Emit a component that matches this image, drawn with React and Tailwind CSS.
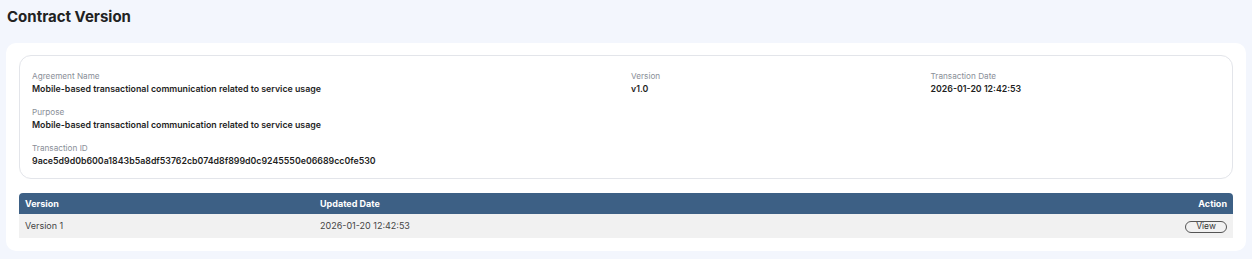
export default function App() {
  const font = { fontFamily: "Inter, 'Noto Sans', sans-serif" };

  return (
    <main className="min-h-[259px] w-full bg-[#f3f6fd] px-[6px] pt-[7px] pb-[8px]" style={font}>
      <h1 className="pl-px text-[15px] font-bold leading-[20px] text-[#222]">Contract Version</h1>

      <section className="mt-[16px] rounded-[10px] bg-white px-[13px] pt-[12px] pb-[13px]">
        <div className="rounded-[12px] border border-[#e3e5ea] px-[12px] pt-[14px] pb-[11px]">
          <div className="grid grid-cols-4 gap-x-[10px]">
            <div className="col-span-2 flex flex-col gap-[11px]">
              <Field label="Agreement Name" value="Mobile-based transactional communication related to service usage" />
              <Field label="Purpose" value="Mobile-based transactional communication related to service usage" />
              <Field label="Transaction ID" value="9ace5d9d0b600a1843b5a8df53762cb074d8f899d0c9245550e06689cc0fe530" />
            </div>
            <div>
              <Field label="Version" value="v1.0" />
            </div>
            <div>
              <Field label="Transaction Date" value="2026-01-20 12:42:53" />
            </div>
          </div>
        </div>

        <table className="mt-[14px] w-full border-collapse text-[9px]">
          <thead className="bg-[#3d6085] text-white">
            <tr>
              <th className="w-[295px] rounded-tl-[4px] px-[6px] py-[4px] text-left font-bold leading-[13px]">Version</th>
              <th className="px-[6px] py-[4px] text-left font-bold leading-[13px]">Updated Date</th>
              <th className="rounded-tr-[4px] px-[6px] py-[4px] text-right font-bold leading-[13px]">Action</th>
            </tr>
          </thead>
          <tbody>
            <tr className="bg-[#f1f1f1] text-[#444]">
              <td className="px-[6px] py-[5px] leading-[14px]">Version 1</td>
              <td className="px-[6px] py-[5px] leading-[14px]">2026-01-20 12:42:53</td>
              <td className="px-[6px] py-[5px] text-right leading-[14px]">
                <button
                  type="button"
                  className="inline-flex h-[12px] w-[42px] items-center justify-center rounded-full border border-[#555] align-middle text-[8.5px] leading-none text-[#333]"
                >
                  View
                </button>
              </td>
            </tr>
          </tbody>
        </table>
      </section>
    </main>
  );
}

function Field({ label, value }) {
  return (
    <div className="flex flex-col">
      <span className="text-[8.2px] leading-[12px] text-[#8a8f98]">{label}</span>
      <span className="text-[8.8px] font-semibold leading-[13px] text-[#1f1f1f]">{value}</span>
    </div>
  );
}
